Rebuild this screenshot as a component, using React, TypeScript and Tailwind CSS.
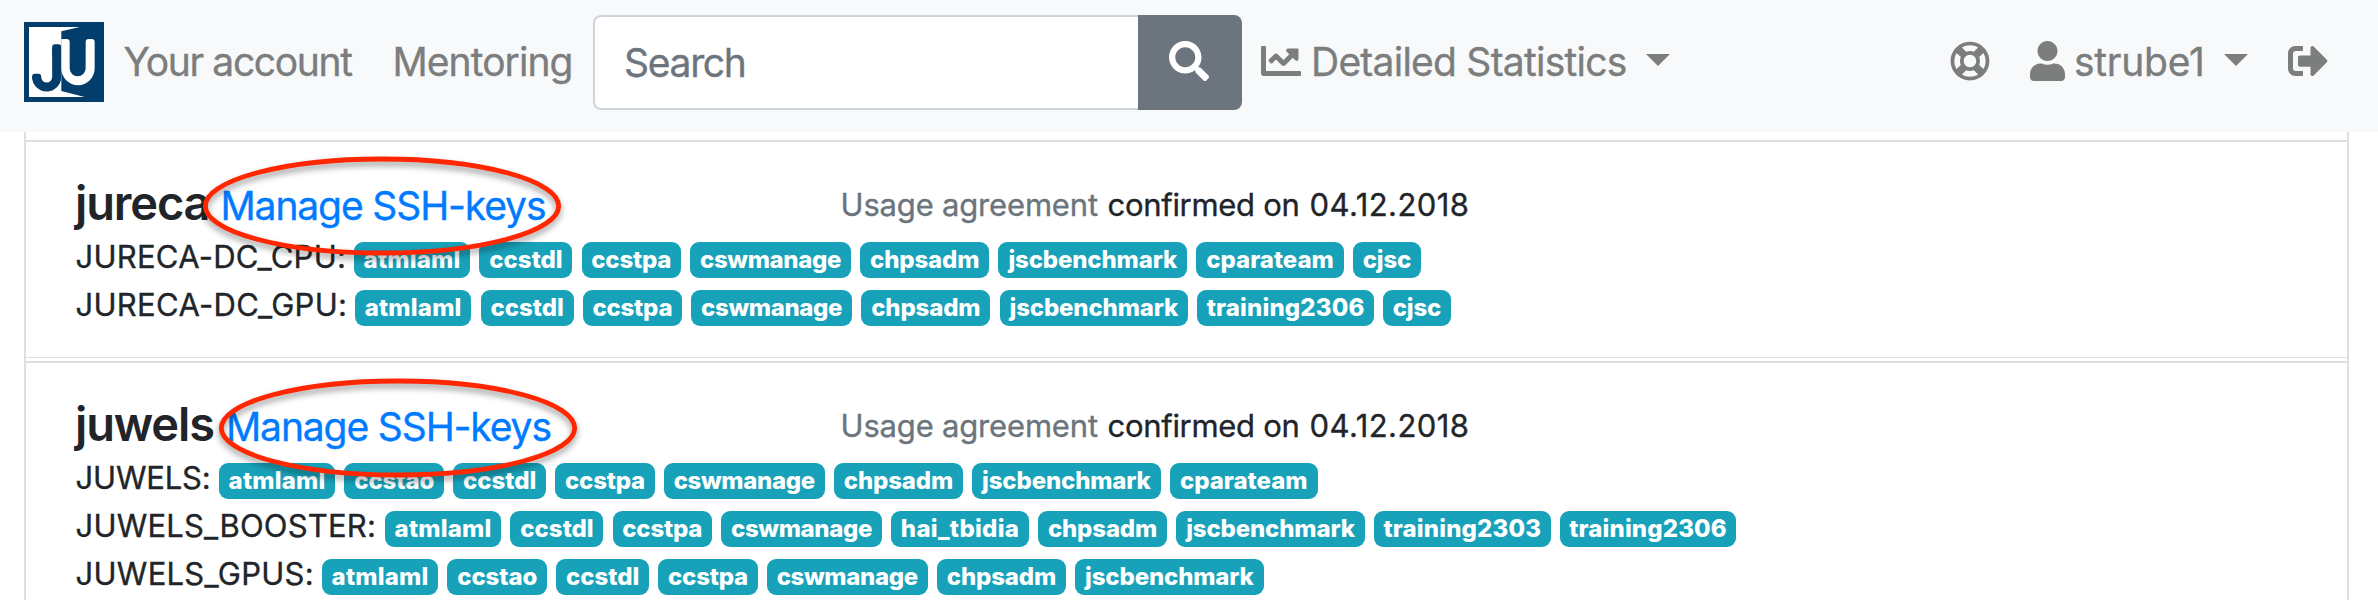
import type { ReactNode } from "react";
import { FaChartLine, FaRegLifeRing, FaSearch, FaSignOutAlt, FaUser } from "react-icons/fa";

const badgeStyle: Record<string, string> = {
  atmlaml: "w-[116.5px] tracking-[0.2px]",
  ccstdl: "w-[93px]",
  ccstpa: "w-[99.2px] tracking-[-0.2px]",
  ccstao: "w-[99.5px] tracking-[-0.1px]",
  cswmanage: "w-[161px] tracking-[-0.35px]",
  chpsadm: "w-[129px] tracking-[-0.15px]",
  jscbenchmark: "w-[188.6px] tracking-[-0.15px]",
  cparateam: "w-[147.7px]",
  cjsc: "w-[67.7px] tracking-[-0.2px]",
  training2303: "w-[176.6px] tracking-[0.15px]",
  training2306: "w-[176.6px] tracking-[0.15px]",
  hai_tbidia: "w-[137.6px] tracking-[0.3px]",
};

type Partition = { name: string; labelClass: string; projects: string[] };

type System = {
  name: string;
  nameClass: string;
  ringClass: string;
  partitions: Partition[];
};

const systems: System[] = [
  {
    name: "jureca",
    nameClass: "w-[145.5px] tracking-[-1.15px]",
    ringClass: "left-[171px] top-[3.9px]",
    partitions: [
      {
        name: "JURECA-DC_CPU:",
        labelClass: "w-[278.3px] tracking-[0.25px]",
        projects: ["atmlaml", "ccstdl", "ccstpa", "cswmanage", "chpsadm", "jscbenchmark", "cparateam", "cjsc"],
      },
      {
        name: "JURECA-DC_GPU:",
        labelClass: "w-[279.4px] tracking-[0.3px]",
        projects: ["atmlaml", "ccstdl", "ccstpa", "cswmanage", "chpsadm", "jscbenchmark", "training2306", "cjsc"],
      },
    ],
  },
  {
    name: "juwels",
    nameClass: "w-[151px] tracking-[-1.15px]",
    ringClass: "left-[187.3px] top-[4.5px]",
    partitions: [
      {
        name: "JUWELS:",
        labelClass: "w-[143.3px] tracking-[-0.18px]",
        projects: ["atmlaml", "ccstao", "ccstdl", "ccstpa", "cswmanage", "chpsadm", "jscbenchmark", "cparateam"],
      },
      {
        name: "JUWELS_BOOSTER:",
        labelClass: "w-[309.3px] tracking-[0.2px]",
        projects: [
          "atmlaml",
          "ccstdl",
          "ccstpa",
          "cswmanage",
          "hai_tbidia",
          "chpsadm",
          "jscbenchmark",
          "training2303",
          "training2306",
        ],
      },
      {
        name: "JUWELS_GPUS:",
        labelClass: "w-[246.3px] tracking-[0.28px]",
        projects: ["atmlaml", "ccstao", "ccstdl", "ccstpa", "cswmanage", "chpsadm", "jscbenchmark"],
      },
    ],
  },
];

function Logo() {
  return (
    <svg viewBox="0 0 240 240" className="ml-6 size-20 shrink-0" aria-hidden="true">
      <rect width="240" height="240" fill="#023d6b" />
      <path d="M15 15H167L112 28V207L182 225H15Z" fill="#fff" />
      <path d="M98 80V165A30 30 0 0 1 38 165V168" fill="none" stroke="#023d6b" strokeWidth="27" />
      <rect x="84.500" y="67" width="27" height="40" rx="8" fill="#023d6b" />
      <rect x="24.500" y="155" width="27" height="20" rx="8" fill="#023d6b" />
      <path d="M112 51H128Q137 51 137 60V139A24 24 0 0 0 185 139V60Q185 51 194 51H203Q212 51 212 60V139A50 51 0 0 1 112 139Z" fill="#fff" />
    </svg>
  );
}

function Caret() {
  return (
    <span className="mt-[-4px] size-0 shrink-0 border-x-[12px] border-t-[12px] border-x-transparent border-t-[#7c7d7d]" />
  );
}

function NavText({ className, children }: { className: string; children: ReactNode }) {
  return <a className={`shrink-0 whitespace-nowrap text-[39px] leading-[60px] ${className}`}>{children}</a>;
}

function Navbar() {
  return (
    <header className="h-[132px] bg-[#f8f9fb] text-[#7c7d7d]">
      <nav className="flex h-[124px] items-center">
        <Logo />
        <NavText className="ml-[19.5px] w-[269px] tracking-[-1.35px]">Your account</NavText>
        <NavText className="w-[200.5px] tracking-[-0.93px]">Mentoring</NavText>
        <form className="mt-px flex h-[95px] w-[649px] shrink-0">
          <div className="flex w-[545px] items-center rounded-l-lg border-2 border-r-0 border-[#ced4da] bg-white pt-[2px] pl-[29px] text-[39px] tracking-[-1.3px] text-[#6c757d]">
            Search
          </div>
          <button type="button" className="flex w-[104px] justify-center rounded-r-lg bg-[#6c757d] pt-[26px] pr-[2px] text-white">
            <FaSearch className="size-10" />
          </button>
        </form>
        <FaChartLine className="mt-[-2px] ml-[19px] size-10 shrink-0" />
        <NavText className="ml-[10px] w-[335px] tracking-[-0.76px]">Detailed Statistics</NavText>
        <Caret />
        <div className="ml-auto flex items-center pr-[50.5px]">
          <FaRegLifeRing className="mt-[-2px] h-10 w-10" />
          <FaUser className="mt-[-2px] ml-10 h-10 w-[35px]" />
          <NavText className="ml-[9px] w-[150px] tracking-[-0.25px]">strube1</NavText>
          <Caret />
          <FaSignOutAlt className="mt-[-2px] ml-[39.5px] size-10" />
        </div>
      </nav>
    </header>
  );
}

function Ring({ className }: { className: string }) {
  return (
    <svg
      viewBox="0 0 370 120"
      className={`pointer-events-none absolute h-[120px] w-[370px] overflow-visible drop-shadow-[0_4px_3px_rgba(0,0,0,0.4)] ${className}`}
      aria-hidden="true"
    >
      <ellipse cx="185" cy="60" rx="176.700" ry="47" fill="none" stroke="#ff2600" strokeWidth="4.800" />
    </svg>
  );
}

function PartitionRow({ name, labelClass, projects }: Partition) {
  return (
    <div className="flex h-12 items-start whitespace-nowrap">
      <span className={`shrink-0 text-[31px] leading-[50px] ${labelClass}`}>{name}</span>
      <div className="mt-[10px] flex gap-[9.2px]">
        {projects.map((project) => (
          <span
            key={project}
            className={`h-9 shrink-0 rounded-[9px] bg-[#18a2ba] text-center text-2xl leading-[35px] font-extrabold text-white [-webkit-text-stroke:0px] ${badgeStyle[project]}`}
          >
            {project}
          </span>
        ))}
      </div>
    </div>
  );
}

function SystemSection({ name, nameClass, ringClass, partitions }: System) {
  return (
    <section className="relative border-t-2 border-[#dedfe0] pt-[30px] pl-[49.5px]">
      <div className="flex h-[60px] whitespace-nowrap">
        <div className="flex w-[765px] shrink-0 items-baseline">
          <h4 className={`ml-[-0.5px] shrink-0 text-[47px] leading-[62px] font-semibold [-webkit-text-stroke:0px] ${nameClass}`}>{name}</h4>
          <a className="text-[39px] tracking-[-1.12px] text-[#007bff]">Manage SSH-keys</a>
        </div>
        <p className="text-[31px] leading-[65px]">
          <span className="inline-block w-[267px] tracking-[-0.18px] text-[#6c757d]">Usage agreement</span>
          <span className="inline-block w-[202px] tracking-[-0.3px]">confirmed on</span>
          <span className="tracking-[0.45px]">04.12.2018</span>
        </p>
      </div>
      {partitions.map((partition) => (
        <PartitionRow key={partition.name} {...partition} />
      ))}
      <Ring className={ringClass} />
    </section>
  );
}

export default function App() {
  return (
    <div className="h-[600px] w-[2378px] overflow-hidden bg-white font-['Inter',sans-serif] text-[#212529] [-webkit-text-stroke:0.35px]">
      <Navbar />
      <main className="ml-6 h-[468px] w-[2325px] border-x-2 border-[#dedfe0] pt-2">
        <SystemSection {...systems[0]} />
        <div className="mt-[29px] mb-[3px] h-px bg-[#dedfe0]" />
        <SystemSection {...systems[1]} />
      </main>
    </div>
  );
}
